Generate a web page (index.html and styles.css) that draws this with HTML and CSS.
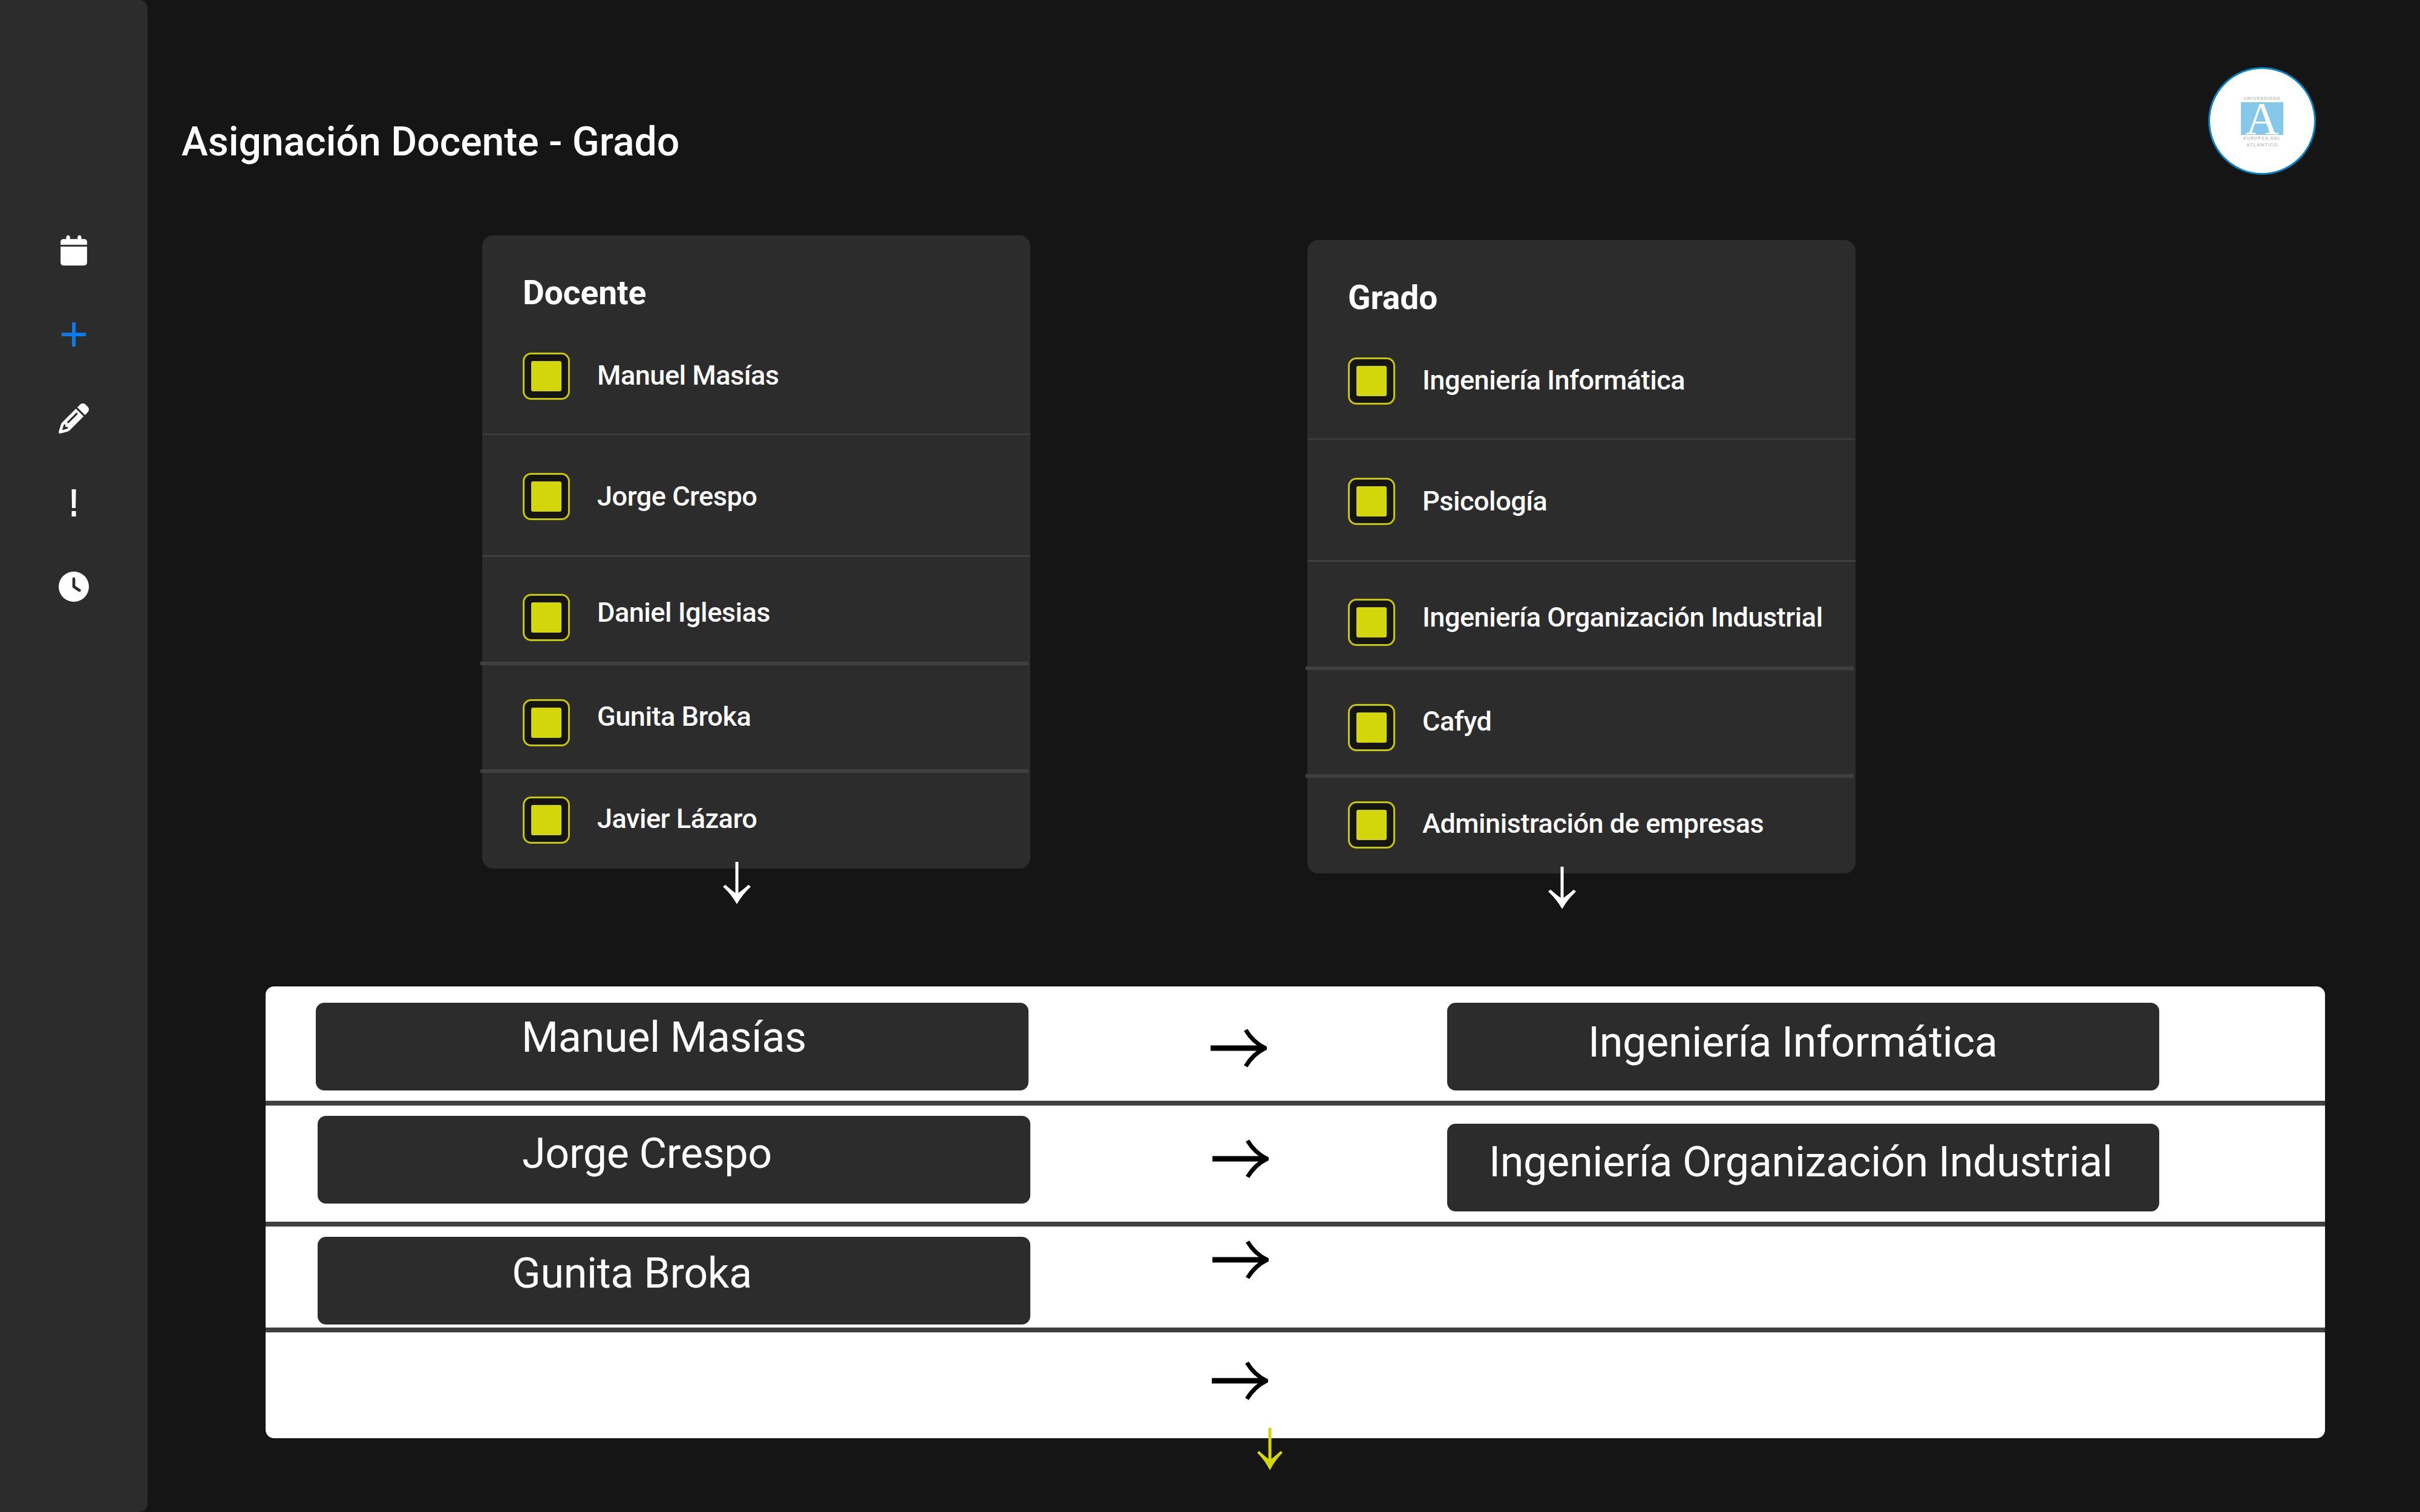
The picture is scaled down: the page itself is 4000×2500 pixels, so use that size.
FILE: index.html
```html
<!DOCTYPE html>
<html lang="es">
<head>
    <meta charset="UTF-8">
    <title>Asignación Docente - Grado</title>
    <link rel="stylesheet" href="styles.css">
</head>
<body>
    <nav class="sidebar">
        <svg class="nav-icon" viewBox="0 0 448 512"><path d="M96 32V64H48C21.5 64 0 85.5 0 112v48H448V112c0-26.5-21.5-48-48-48H352V32c0-17.7-14.3-32-32-32s-32 14.3-32 32V64H160V32c0-17.7-14.3-32-32-32S96 14.3 96 32zM448 192H0V464c0 26.5 21.5 48 48 48H400c26.5 0 48-21.5 48-48V192z"/></svg>
        <svg class="nav-icon nav-active" viewBox="0 0 50 50"><path d="M22 5h6v17h17v6H28v17h-6V28H5v-6h17z"/></svg>
        <svg class="nav-icon" viewBox="0 0 512 512"><path d="M410.3 231l11.3-11.3-33.9-33.9-62.1-62.1L291.7 89.8l-11.3 11.3-22.6 22.6L58.6 322.9c-10.4 10.4-18 23.3-22.2 37.4L1 480.7c-2.5 8.4-.2 17.5 6.1 23.7s15.3 8.5 23.7 6.1l120.3-35.4c14.1-4.2 27-11.8 37.4-22.2L387.7 253.7 410.3 231zM160 399.4l-9.1 22.7c-4 3.1-8.5 5.4-13.3 6.9L59.4 452l23-78.1c1.4-4.9 3.8-9.4 6.9-13.3l22.7-9.1v32c0 8.8 7.2 16 16 16h32zM362.7 18.7L348.3 33.2 325.7 55.8 314.3 67.1l33.9 33.9 62.1 62.1 33.9 33.9 11.3-11.3 22.6-22.6 14.5-14.5c25-25 25-65.5 0-90.5L453.3 18.7c-25-25-65.5-25-90.5 0zm-47.4 168l-144 144c-6.2 6.2-16.4 6.2-22.6 0s-6.2-16.4 0-22.6l144-144c6.2-6.2 16.4-6.2 22.6 0s6.2 16.4 0 22.6z"/></svg>
        <svg class="nav-icon" viewBox="0 0 50 50"><path d="M21.5 3h7l-.5 31h-6zM21.5 39h7v9h-7z"/></svg>
        <svg class="nav-icon" viewBox="0 0 512 512"><path d="M256 0a256 256 0 1 1 0 512A256 256 0 1 1 256 0zM232 120V256c0 8 4 15.5 10.7 20l96 64c11 7.4 25.9 4.4 33.3-6.7s4.4-25.9-6.7-33.3L280 243.2V120c0-13.3-10.7-24-24-24s-24 10.7-24 24z"/></svg>
    </nav>

    <main class="main">
        <header class="header">
            <h1 class="title">Asignación Docente - Grado</h1>
            <div class="logo">
                <span class="logo-text">UNIVERSIDAD</span>
                <svg class="logo-mark" viewBox="0 0 70 54"><rect width="70" height="54"/><text class="logo-letter" x="35" y="53">A</text></svg>
                <span class="logo-text">EUROPEA DEL</span>
                <span class="logo-text">ATLÁNTICO</span>
            </div>
        </header>

        <section class="lists">
            <div class="list-col">
                <div class="card">
                    <h3 class="card-title">Docente</h3>
                    <label class="item"><span class="check"><span class="check-fill"></span></span><span class="item-name">Manuel Masías</span></label>
                    <label class="item"><span class="check"><span class="check-fill"></span></span><span class="item-name">Jorge Crespo</span></label>
                    <label class="item"><span class="check"><span class="check-fill"></span></span><span class="item-name">Daniel Iglesias</span></label>
                    <label class="item"><span class="check"><span class="check-fill"></span></span><span class="item-name">Gunita Broka</span></label>
                    <label class="item"><span class="check"><span class="check-fill"></span></span><span class="item-name">Javier Lázaro</span></label>
                </div>
                <svg class="arrow-down" viewBox="0 0 48 70"><path class="shaft" d="M24 0V62"/><path class="head" d="M1 41L5 38Q16 48 24 53Q32 48 43 38L47 41Q33 54 24 70Q15 54 1 41Z"/></svg>
            </div>
            <div class="list-col list-col-right">
                <div class="card">
                    <h3 class="card-title">Grado</h3>
                    <label class="item"><span class="check"><span class="check-fill"></span></span><span class="item-name">Ingeniería Informática</span></label>
                    <label class="item"><span class="check"><span class="check-fill"></span></span><span class="item-name">Psicología</span></label>
                    <label class="item"><span class="check"><span class="check-fill"></span></span><span class="item-name">Ingeniería Organización Industrial</span></label>
                    <label class="item"><span class="check"><span class="check-fill"></span></span><span class="item-name">Cafyd</span></label>
                    <label class="item"><span class="check"><span class="check-fill"></span></span><span class="item-name">Administración de empresas</span></label>
                </div>
                <svg class="arrow-down" viewBox="0 0 48 70"><path class="shaft" d="M24 0V62"/><path class="head" d="M1 41L5 38Q16 48 24 53Q32 48 43 38L47 41Q33 54 24 70Q15 54 1 41Z"/></svg>
            </div>
        </section>

        <section class="panel">
            <div class="row row-1">
                <div class="box box-left"><span class="box-text">Manuel Masías</span></div>
                <svg class="arrow-right" viewBox="0 0 93 66"><path class="shaft" d="M0 33H88"/><path d="M58 3Q70 23 90 33Q70 43 58 63"/></svg>
                <div class="box box-right"><span class="box-text">Ingeniería Informática</span></div>
            </div>
            <div class="row row-2">
                <div class="box box-left"><span class="box-text">Jorge Crespo</span></div>
                <svg class="arrow-right" viewBox="0 0 93 66"><path class="shaft" d="M0 33H88"/><path d="M58 3Q70 23 90 33Q70 43 58 63"/></svg>
                <div class="box box-right"><span class="box-text">Ingeniería Organización Industrial</span></div>
            </div>
            <div class="row row-3">
                <div class="box box-left"><span class="box-text">Gunita Broka</span></div>
                <svg class="arrow-right" viewBox="0 0 93 66"><path class="shaft" d="M0 33H88"/><path d="M58 3Q70 23 90 33Q70 43 58 63"/></svg>
            </div>
            <div class="row row-4">
                <div class="box-empty"></div>
                <svg class="arrow-right" viewBox="0 0 93 66"><path class="shaft" d="M0 33H88"/><path d="M58 3Q70 23 90 33Q70 43 58 63"/></svg>
            </div>
        </section>
        <svg class="arrow-down arrow-yellow" viewBox="0 0 48 70"><path class="shaft" d="M24 0V62"/><path class="head" d="M3 41L6 38Q17 48 24 53Q31 48 42 38L45 41Q32 54 24 70Q16 54 3 41Z"/></svg>
    </main>
</body>
</html>
```

FILE: styles.css
```css
* {
    box-sizing: border-box;
}
body {
    margin: 0;
    height: 2500px;
    display: flex;
    overflow: hidden;
    background-color: #151515;
    color: #fff;
    font-family: Roboto, "Liberation Sans", sans-serif;
}

/* sidebar */
.sidebar {
    width: 244px;
    height: 2500px;
    flex-shrink: 0;
    padding-top: 389px;
    display: flex;
    flex-direction: column;
    align-items: center;
    gap: 89px;
    background-color: #2c2c2c;
    border-radius: 0 14px 14px 0;
}
.nav-icon {
    width: 50px;
    height: 50px;
    fill: #fff;
}
.nav-active {
    fill: #0a7be8;
}

/* header */
.main {
    flex: 1;
    min-width: 0;
}
.header {
    height: 289px;
    padding: 111px 172px 0 56px;
    display: flex;
    justify-content: space-between;
    align-items: flex-start;
}
.title {
    margin: 86px 0 0;
    font-size: 66px;
    line-height: 76px;
    font-weight: 500;
}
.logo {
    width: 178px;
    height: 178px;
    padding-top: 43px;
    display: flex;
    flex-direction: column;
    align-items: center;
    background-color: #fff;
    border: 3px solid #0a84c8;
    border-radius: 50%;
}
.logo-text {
    font-size: 8px;
    line-height: 11px;
    letter-spacing: 1px;
    color: #aaa;
    white-space: nowrap;
}
.logo-mark {
    width: 70px;
    height: 54px;
    margin-top: 1px;
    flex-shrink: 0;
    overflow: visible;
    fill: #85c8ea;
}
.logo-letter {
    fill: #fff;
    font-family: "Liberation Serif", serif;
    font-size: 76px;
    text-anchor: middle;
}

/* lists */
.lists {
    margin: 100px 0 0 553px;
    display: flex;
    gap: 458px;
    height: 1112px;
}
.list-col {
    width: 906px;
}
.list-col-right {
    padding-top: 8px;
}
.card {
    height: 1047px;
    padding-top: 65px;
    background-color: #2c2c2c;
    border-radius: 18px;
}
.card-title {
    margin: 0 0 0 67px;
    font-size: 55px;
    line-height: 60px;
    font-weight: 700;
}
.item {
    display: flex;
    align-items: flex-start;
    padding-left: 67px;
    border-bottom: 3px solid #404040;
}
.item:nth-of-type(1) {
    height: 205px;
    padding-top: 69px;
    border-bottom-width: 2px;
}
.item:nth-of-type(2) {
    height: 202px;
    padding-top: 63px;
}
.item:nth-of-type(3) {
    height: 179px;
    padding: 61px 0 0 70px;
    margin: 0 3px 0 -3px;
    border-bottom-width: 6px;
}
.item:nth-of-type(4) {
    height: 178px;
    padding: 56px 0 0 70px;
    margin: 0 3px 0 -3px;
    border-bottom-width: 6px;
}
.item:nth-of-type(5) {
    height: 158px;
    padding-top: 39px;
    border-bottom: 0;
}
.check {
    width: 78px;
    height: 78px;
    flex-shrink: 0;
    display: flex;
    align-items: center;
    justify-content: center;
    background-color: #151515;
    border: 3px solid #c8c800;
    border-radius: 14px;
}
.check-fill {
    width: 50px;
    height: 50px;
    background-color: #d4d60c;
    border-radius: 3px;
}
.item-name {
    margin-left: 45px;
    font-size: 45px;
    line-height: 60px;
    font-weight: 500;
    letter-spacing: -0.45px;
    white-space: nowrap;
}
.item:nth-of-type(1) .item-name {
    margin-top: 8px;
}
.item:nth-of-type(2) .item-name {
    margin-top: 9px;
}
.item:nth-of-type(3) .item-name {
    margin-top: 1px;
}
.item:nth-of-type(4) .item-name {
    margin-top: -1px;
}
.item:nth-of-type(5) .item-name {
    margin-top: 7px;
}
.arrow-down {
    display: block;
    width: 48px;
    height: 70px;
    margin: -11px 0 0 397px;
    fill: #fff;
}
.arrow-down .shaft {
    fill: none;
    stroke: #fff;
    stroke-width: 5;
}

/* assignment table */
.panel {
    width: 3404px;
    height: 747px;
    margin: 130px 0 0 195px;
    background-color: #fff;
    border-radius: 14px;
}
.row {
    display: grid;
    grid-template-columns: 1562px 93px 1fr;
    align-items: start;
    border-bottom: 8px solid #404040;
}
.row-1 {
    height: 197px;
    padding-top: 27px;
}
.row-2 {
    height: 200px;
    padding-top: 17px;
}
.row-3 {
    height: 175px;
    padding-top: 17px;
}
.row-4 {
    border-bottom: 0;
}
.box {
    height: 145px;
    background-color: #2c2c2c;
    border-radius: 14px;
    color: #fff;
    font-size: 70px;
    line-height: 82px;
    font-weight: 400;
    letter-spacing: -0.3px;
    white-space: nowrap;
}
.box-left {
    width: 1178px;
    margin-left: 83px;
}
.box-right {
    width: 1177px;
    margin-left: 298px;
}
.row-2 .box-left,
.row-3 .box-left {
    margin-left: 86px;
}
.box-text {
    display: block;
    padding-top: 16px;
}
.row-1 .box-left .box-text {
    margin-left: 340px;
}
.row-1 .box-right .box-text {
    margin-left: 233px;
    padding-top: 24px;
}
.row-2 .box-left .box-text {
    margin-left: 338px;
    padding-top: 21px;
}
.row-2 .box-right {
    margin-top: 13px;
}
.row-2 .box-right .box-text {
    margin-left: 69px;
    padding-top: 22px;
}
.row-3 .box-left .box-text {
    margin-left: 321px;
    padding-top: 19px;
}
.arrow-right {
    display: block;
    width: 93px;
    height: 66px;
    fill: none;
    stroke: #000;
    stroke-width: 7;
}
.arrow-right .shaft {
    stroke-width: 9;
}
.row-1 .arrow-right {
    margin-top: 42px;
}
.row-2 .arrow-right {
    margin: 38px 0 0 3px;
}
.row-3 .arrow-right {
    margin: 5px 0 0 3px;
}
.row-4 .arrow-right {
    margin: 47px 0 0 2px;
}
.arrow-yellow {
    margin: -17px 0 0 1831px;
    fill: #d4d60c;
    position: relative;
}
.arrow-yellow .shaft {
    stroke: #d4d60c;
}
```
